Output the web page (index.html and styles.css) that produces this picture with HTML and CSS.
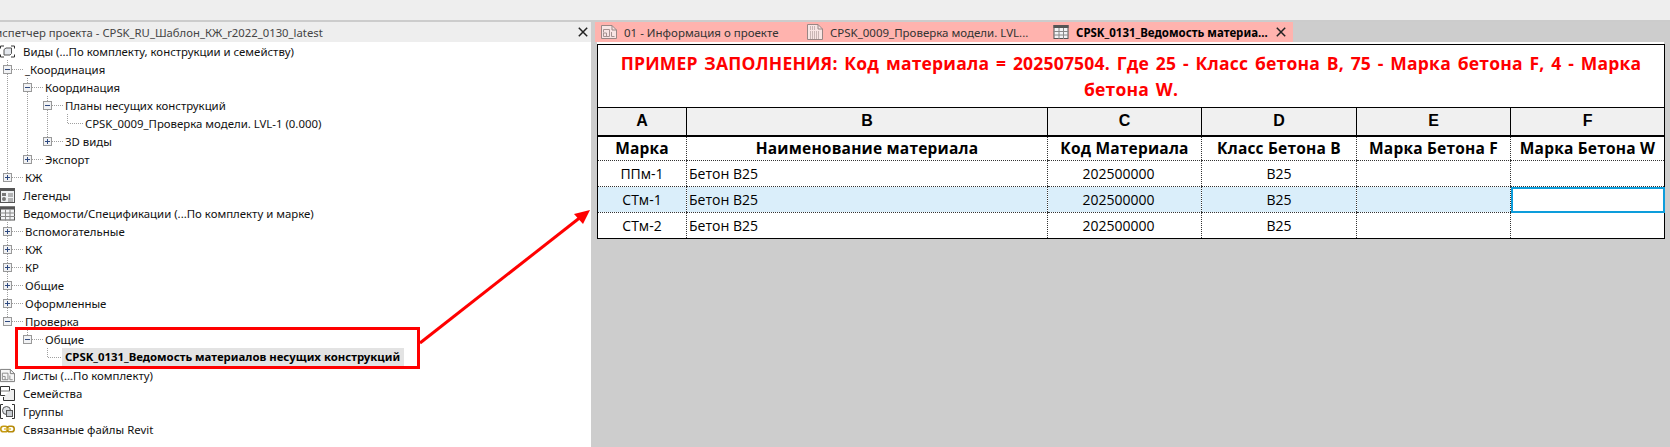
FILE: index.html
```html
<!DOCTYPE html>
<html lang="ru">
<head>
<meta charset="utf-8">
<title>Revit</title>
<link rel="stylesheet" href="styles.css">
</head>
<body>
<svg class="defs" width="0" height="0" aria-hidden="true">
  <symbol id="i-views" viewBox="0 0 15 14">
    <path d="M0.5 4V1.5H4M11 1.5H14.5V4M14.5 10V12.5H11M4 12.5H0.5V10" fill="none" stroke="#333" stroke-width="1"/>
    <path d="M4 5L6 3.5H11.5V9L10 10.5H4Z" fill="#e4e8ee" stroke="#555" stroke-width="1"/>
  </symbol>
  <symbol id="i-legend" viewBox="0 0 15 15">
    <rect x="0.5" y="0.5" width="14" height="14" fill="#eef0f2" stroke="#555"/>
    <rect x="0" y="0" width="15" height="3" fill="#555"/>
    <rect x="2" y="5" width="4" height="3" fill="#777"/>
    <circle cx="4" cy="11" r="2" fill="#777"/>
    <path d="M8 6H13M8 8H13M8 11H13M8 13H13" stroke="#777" stroke-width="1"/>
  </symbol>
  <symbol id="i-table" viewBox="0 0 15 14">
    <rect x="0.5" y="0.5" width="14" height="13" fill="#f2f3f5" stroke="#555"/>
    <rect x="0" y="0" width="15" height="3" fill="#555"/>
    <path d="M0 6.5H15M0 10H15M5.5 3V14M10 3V14" stroke="#888" stroke-width="1"/>
  </symbol>
  <symbol id="i-sheet" viewBox="0 0 16 14">
    <path d="M0.5 0.5H11L15.5 5V13.5H0.5Z" fill="#f6f6f6" stroke="#777"/>
    <path d="M11 0.5V5H15.5" fill="none" stroke="#777"/>
    <path d="M2.5 7.5V4.5H8.5V11.5H2.5V8H5.5V11.5M10.5 7V11.5H13.5" fill="none" stroke="#888"/>
  </symbol>
  <symbol id="i-plan" viewBox="0 0 16 16">
    <path d="M0.5 0.5H11L15.5 5V15.5H0.5Z" fill="#f6f6f6" stroke="#777"/>
    <path d="M11 0.5V5H15.5" fill="none" stroke="#777"/>
    <path d="M3 3H8M3 5H8M3 8H13M3 10H13M3 12H13M3 14H13" stroke="#777" stroke-dasharray="1 1"/>
  </symbol>
  <symbol id="i-family" viewBox="0 0 15 15">
    <path d="M0.5 0.5H9.5V9.5H0.5Z" fill="#fff" stroke="#333"/>
    <path d="M11 3.5H14.5V14.5H3.5V11" fill="#eee" stroke="#333"/>
    <path d="M0.5 5H9.5" stroke="#777"/>
  </symbol>
  <symbol id="i-group" viewBox="0 0 15 15">
    <path d="M3 0.5H0.5V14.5H3M12 0.5H14.5V14.5H12" fill="none" stroke="#333"/>
    <circle cx="6.5" cy="6.5" r="4" fill="#dfe2e6" stroke="#555"/>
    <rect x="6.5" y="6.5" width="6" height="6" fill="#c9cdd2" stroke="#555"/>
  </symbol>
  <symbol id="i-link" viewBox="0 0 15 8">
    <rect x="0.8" y="1.2" width="7" height="5.6" rx="2.6" fill="none" stroke="#c59a12" stroke-width="1.6"/>
    <rect x="7.2" y="1.2" width="7" height="5.6" rx="2.6" fill="none" stroke="#b58a0a" stroke-width="1.6"/>
    <path d="M4 4H11" stroke="#e0bb3a" stroke-width="1.4"/>
  </symbol>
  <symbol id="i-x" viewBox="0 0 10 10">
    <path d="M0.8 0.8L9.2 9.2M9.2 0.8L0.8 9.2" stroke="#222" stroke-width="1.5" fill="none"/>
  </symbol>
</svg>

<div class="topbar"></div>
<main class="work">
  <aside class="browser">
    <header class="browser-title">
      <span class="browser-name">Диспетчер проекта - CPSK_RU_Шаблон_КЖ_r2022_0130_latest</span>
      <svg class="x-icon"><use href="#i-x"/></svg>
    </header>
    <div class="tree">
      <div class="row"><svg class="ri ri-views"><use href="#i-views"/></svg><span>Виды (...По комплекту, конструкции и семейству)</span></div>
      <div class="row"><i class="node mid minus"><b></b></i><span>_Координация</span></div>
      <div class="row"><i class="g on"></i><i class="node mid minus"><b></b></i><span>Координация</span></div>
      <div class="row"><i class="g on"></i><i class="g on"></i><i class="node mid minus"><b></b></i><span>Планы несущих конструкций</span></div>
      <div class="row"><i class="g on"></i><i class="g on"></i><i class="g on"></i><i class="node leaf"></i><span>CPSK_0009_Проверка модели. LVL-1 (0.000)</span></div>
      <div class="row"><i class="g on"></i><i class="g on"></i><i class="node last plus"><b></b></i><span>3D виды</span></div>
      <div class="row"><i class="g on"></i><i class="node last plus"><b></b></i><span>Экспорт</span></div>
      <div class="row"><i class="node last plus"><b></b></i><span>КЖ</span></div>
      <div class="row"><svg class="ri ri-legend"><use href="#i-legend"/></svg><span>Легенды</span></div>
      <div class="row"><svg class="ri ri-table"><use href="#i-table"/></svg><span>Ведомости/Спецификации (...По комплекту и марке)</span></div>
      <div class="row"><i class="node mid plus"><b></b></i><span>Вспомогательные</span></div>
      <div class="row"><i class="node mid plus"><b></b></i><span>КЖ</span></div>
      <div class="row"><i class="node mid plus"><b></b></i><span>КР</span></div>
      <div class="row"><i class="node mid plus"><b></b></i><span>Общие</span></div>
      <div class="row"><i class="node mid plus"><b></b></i><span>Оформленные</span></div>
      <div class="row"><i class="node last minus"><b></b></i><span>Проверка</span></div>
      <div class="row"><i class="g"></i><i class="node last minus"><b></b></i><span>Общие</span></div>
      <div class="row"><i class="g"></i><i class="g"></i><i class="node leaf"></i><span class="current">CPSK_0131_Ведомость материалов несущих конструкций</span></div>
      <div class="row"><svg class="ri ri-sheet"><use href="#i-sheet"/></svg><span>Листы (...По комплекту)</span></div>
      <div class="row"><svg class="ri ri-family"><use href="#i-family"/></svg><span>Семейства</span></div>
      <div class="row"><svg class="ri ri-group"><use href="#i-group"/></svg><span>Группы</span></div>
      <div class="row"><svg class="ri ri-link"><use href="#i-link"/></svg><span>Связанные файлы Revit</span></div>
    </div>
  </aside>

  <section class="views">
    <nav class="tabs">
      <div class="tab t1"><svg class="ti faded"><use href="#i-sheet"/></svg><span>01 - Информация о проекте</span></div>
      <div class="tab t2"><svg class="ti faded tall"><use href="#i-plan"/></svg><span>CPSK_0009_Проверка модели. LVL...</span></div>
      <div class="tab t3"><svg class="ti"><use href="#i-table"/></svg><span class="active">CPSK_0131_Ведомость материа...</span><svg class="x-icon"><use href="#i-x"/></svg></div>
    </nav>
    <div class="sheet">
      <table class="schedule">
        <colgroup><col class="ca"><col class="cb"><col class="cc"><col class="cd"><col class="cc"><col class="cc"></colgroup>
        <tr class="r-title"><td colspan="6">ПРИМЕР ЗАПОЛНЕНИЯ: Код материала = 202507504. Где 25 - Класс бетона B, 75 - Марка бетона F, 4 - Марка<br>бетона W.</td></tr>
        <tr class="r-letters"><th>A</th><th>B</th><th>C</th><th>D</th><th>E</th><th>F</th></tr>
        <tr class="r-head"><th>Марка</th><th>Наименование материала</th><th>Код Материала</th><th>Класс Бетона B</th><th>Марка Бетона F</th><th>Марка Бетона W</th></tr>
        <tr class="r-data"><td>ППм-1</td><td class="left">Бетон B25</td><td class="code">202500000</td><td>B25</td><td></td><td></td></tr>
        <tr class="r-data sel"><td>СТм-1</td><td class="left">Бетон B25</td><td class="code">202500000</td><td>B25</td><td></td><td class="focus"></td></tr>
        <tr class="r-data"><td>СТм-2</td><td class="left">Бетон B25</td><td class="code">202500000</td><td>B25</td><td></td><td></td></tr>
      </table>
    </div>
  </section>
</main>

<svg class="markup" viewBox="0 0 1670 447" aria-hidden="true">
  <rect x="16.5" y="328.5" width="402" height="39" fill="none" stroke="#f00" stroke-width="3"/>
  <path d="M420 343L582 216" stroke="#f00" stroke-width="3" fill="none"/>
  <path d="M590 210L574 214L583 224Z" fill="#f00"/>
</svg>
</body>
</html>
```
FILE: styles.css
```css
* { box-sizing: border-box; }
html, body { margin: 0; padding: 0; }
body {
  width: 1670px;
  height: 447px;
  overflow: hidden;
  position: relative;
  background: #fff;
  font-family: "Noto Sans", "Open Sans", sans-serif;
  font-size: 11.5px;
  color: #111;
}
.defs { position: absolute; }
.topbar { height: 22px; background: #eee; border-bottom: 2px solid #ccc; }
.work { display: flex; height: 425px; }
.x-icon { width: 10px; height: 10px; flex: none; }

/* project browser */
.browser { width: 591px; flex: none; background: #fff; overflow: hidden; }
.browser-title {
  height: 20px;
  background: #eee;
  display: flex;
  align-items: center;
  justify-content: space-between;
  padding-right: 3px;
  color: #444;
  font-size: 11.3px;
  white-space: nowrap;
}
.browser-name { margin-left: -13px; }
.tree { margin-left: -2px; font-size: 11.4px; }
.row { height: 18px; display: flex; align-items: center; white-space: nowrap; }
.g { width: 20px; height: 18px; flex: none; }
.g.on {
  background: repeating-linear-gradient(to bottom, #a0a0a0 0 1px, transparent 1px 2px) 9px 0 / 1px 100% no-repeat;
}
.node {
  --vh: 100%;
  width: 27px;
  height: 18px;
  flex: none;
  display: flex;
  align-items: center;
  padding-left: 5px;
  background:
    repeating-linear-gradient(to right, #a0a0a0 0 1px, transparent 1px 2px) 14px 9px / 11px 1px no-repeat,
    repeating-linear-gradient(to bottom, #a0a0a0 0 1px, transparent 1px 2px) 9px 0 / 1px var(--vh) no-repeat;
}
.node.last { --vh: 9px; }
.node.leaf { --vh: 10px; background:
    repeating-linear-gradient(to right, #a0a0a0 0 1px, transparent 1px 2px) 10px 9px / 15px 1px no-repeat,
    repeating-linear-gradient(to bottom, #a0a0a0 0 1px, transparent 1px 2px) 9px 0 / 1px var(--vh) no-repeat;
}
.node b {
  display: block;
  width: 9px;
  height: 9px;
  border: 1px solid #999;
  background-color: #f1f2f4;
  background-repeat: no-repeat;
}
.node.minus b { background-image: linear-gradient(#2f4a80, #2f4a80); background-size: 5px 1px; background-position: 1px 3px; }
.node.plus b {
  background-image: linear-gradient(#2f4a80, #2f4a80), linear-gradient(#2f4a80, #2f4a80);
  background-size: 5px 1px, 1px 5px;
  background-position: 1px 3px, 3px 1px;
}
.ri { width: 15px; height: 15px; margin: 0 8px 0 2px; flex: none; }
.ri-link { height: 8px; }
.current { background: #e3e3e3; font-weight: 700; padding: 0 4px 0 3px; margin-left: -3px; height: 18px; line-height: 18px; color: #000; }

/* view tabs */
.views { flex: 1; min-width: 0; background: #cdcdcd; padding-left: 4px; }
.tabs { height: 20px; display: flex; }
.tab {
  background: #ffb3ae;
  height: 20px;
  display: flex;
  align-items: center;
  padding-left: 6px;
  color: #333;
  white-space: nowrap;
}
.t1 { width: 206px; }
.t2 { width: 247px; }
.t3 { width: 245px; padding-left: 5px; justify-content: flex-start; }
.ti { width: 16px; height: 14px; margin-right: 7px; flex: none; }
.ti.tall { height: 16px; }
.ti.faded { opacity: .75; }
.active { color: #000; font-weight: 700; margin-right: 8px; }

/* schedule */
.sheet { margin-left: 2px; width: 1067px; background: #fff; padding-top: 2px; }
.schedule {
  width: 1067px;
  table-layout: fixed;
  border-collapse: collapse;
  background: #fff;
  border: 1px solid #000;
  font-family: "Open Sans", "Noto Sans", sans-serif;
  color: #000;
}
.ca { width: 89px; }
.cb { width: 361px; }
.cc { width: 154px; }
.cd { width: 155px; }
.schedule td, .schedule th { padding: 0; text-align: center; overflow: hidden; white-space: nowrap; }
.r-title td {
  height: 63px;
  color: #f00;
  font-size: 17.5px;
  font-weight: 700;
  line-height: 26px;
  letter-spacing: .2px;
  word-spacing: 2px;
  border-bottom: 1px solid #000;
}
.r-letters th {
  height: 28px;
  background: #f0f0f0;
  font-family: "Liberation Sans", sans-serif;
  font-size: 16px;
  border-left: 1px solid #000;
  border-bottom: 2px solid #000;
}
.r-head th {
  height: 25px;
  font-size: 15.5px;
  letter-spacing: .2px;
  border-left: 1px dotted #333;
  border-bottom: 1px dotted #333;
}
.r-data td {
  height: 26px;
  font-size: 14px;
  border-left: 1px dotted #333;
  border-bottom: 1px dotted #333;
}
.r-data:last-child td { border-bottom: 1px solid #000; }
.schedule td.left { text-align: left; padding-left: 2px; }
.schedule td.code { padding-right: 12px; }
.sel td { background: #daeefa; }
.schedule td.focus { background: #fff; outline: 2px solid #0d9ddb; outline-offset: -2px; }

/* red markup lying over the screen */
.markup { position: absolute; left: 0; top: 0; width: 1670px; height: 447px; pointer-events: none; }
```
